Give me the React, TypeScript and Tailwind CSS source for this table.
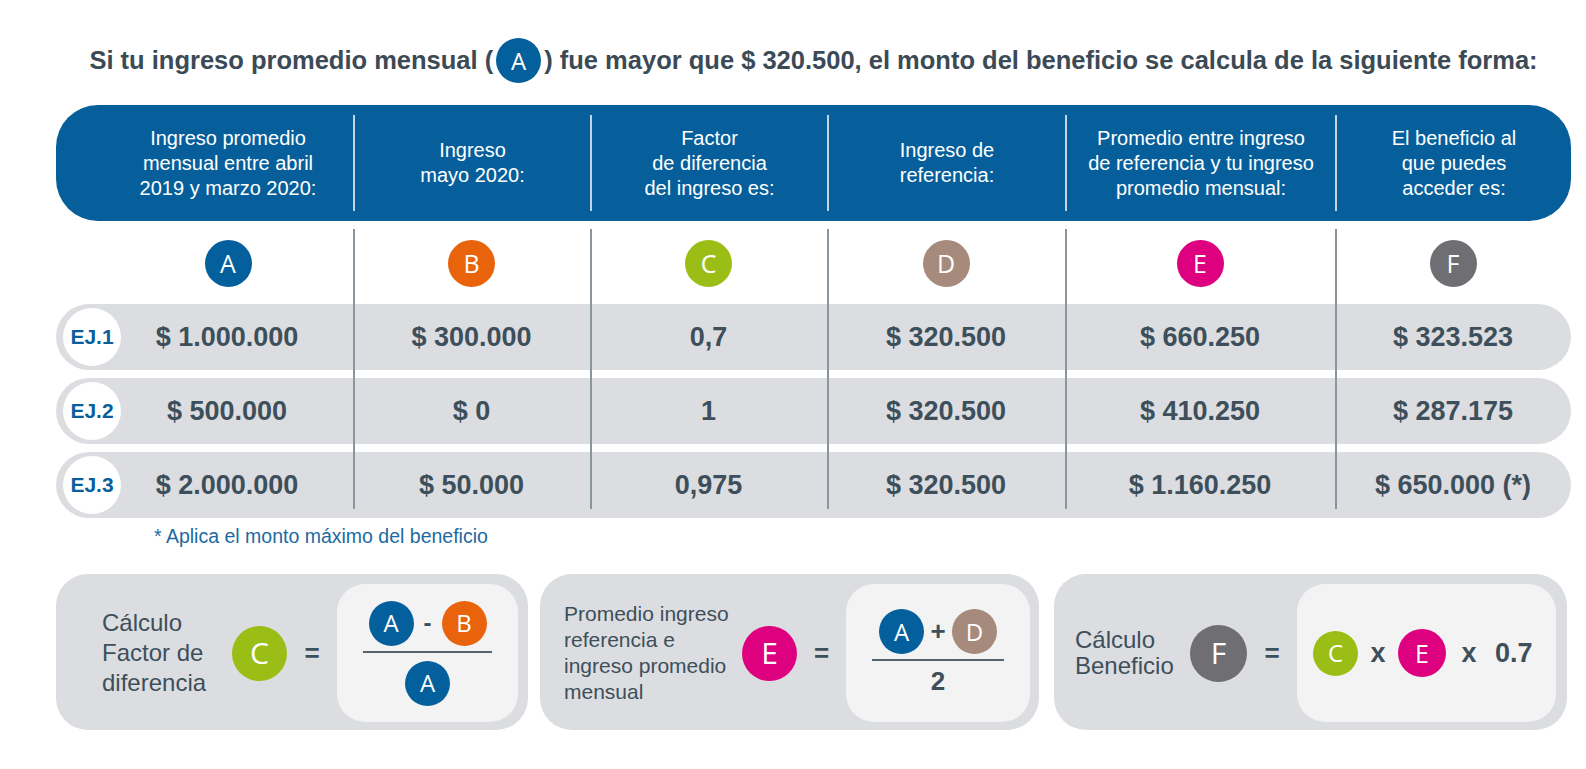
import React from 'react';

const COLS = 'grid grid-cols-[297px_237px_237px_238px_270px_236px]';

const BG: Record<string, string> = {
  A: 'bg-[#03609c]',
  B: 'bg-[#e8630c]',
  C: 'bg-[#9bbe17]',
  D: 'bg-[#a68a7b]',
  E: 'bg-[#dd007f]',
  F: 'bg-[#6e6e73]',
};

const Dot = ({ l, size }: { l: string; size: string }) => (
  <span
    className={`${BG[l]} ${size} inline-flex shrink-0 items-center justify-center rounded-full text-white font-normal font-['Open_Sans',sans-serif] leading-none`}
  >
    {l}
  </span>
);

const headers = [
  ['Ingreso promedio', 'mensual entre abril', '2019 y marzo 2020:'],
  ['Ingreso', 'mayo 2020:'],
  ['Factor', 'de diferencia', 'del ingreso es:'],
  ['Ingreso de', 'referencia:'],
  ['Promedio entre ingreso', 'de referencia y tu ingreso', 'promedio mensual:'],
  ['El beneficio al', 'que puedes', 'acceder es:'],
];

const rows = [
  ['EJ.1', '$ 1.000.000', '$ 300.000', '0,7', '$ 320.500', '$ 660.250', '$ 323.523'],
  ['EJ.2', '$ 500.000', '$ 0', '1', '$ 320.500', '$ 410.250', '$ 287.175'],
  ['EJ.3', '$ 2.000.000', '$ 50.000', '0,975', '$ 320.500', '$ 1.160.250', '$ 650.000 (*)'],
];

const letters = ['A', 'B', 'C', 'D', 'E', 'F'];

export default function App() {
  return (
    <div className="w-[1586px] h-[769px] bg-white font-['Liberation_Sans',Arial,sans-serif] text-[#3d4f5b]">
      <div className="ml-[56px] w-[1515px]">
        {/* title */}
        <div className="pt-[38px] flex items-center justify-center text-[25.5px] font-bold text-[#3b4a55] whitespace-nowrap">
          <span>Si tu ingreso promedio mensual (</span>
          <span className="mx-[3px] flex">
            <Dot l="A" size="w-[45px] h-[45px] text-[24px]" />
          </span>
          <span>) fue mayor que $ 320.500, el monto del beneficio se calcula de la siguiente forma:</span>
        </div>

        {/* header bar */}
        <div className={`${COLS} mt-[22px] h-[116px] rounded-[42px] bg-[#065f9b] text-white text-[20px] leading-[25px]`}>
          {headers.map((lines, i) => (
            <div key={i} className="h-full py-[10px]">
              <div
                className={
                  i === 0
                    ? 'h-full flex flex-col items-center justify-center text-center pl-[67px] pr-[20px]'
                    : 'h-full flex flex-col items-center justify-center text-center border-l-2 border-[#c3d4e3]'
                }
              >
                {lines.map((t) => (
                  <span key={t}>{t}</span>
                ))}
              </div>
            </div>
          ))}
        </div>

        {/* letters and examples */}
        <div className="relative mt-[8px]">
          <div className={`${COLS} pt-[11px]`}>
            {letters.map((l, i) => (
              <div key={l} className={i === 0 ? 'flex justify-center pl-[67px] pr-[20px]' : 'flex justify-center'}>
                <Dot l={l} size="w-[47px] h-[47px] text-[25px]" />
              </div>
            ))}
          </div>

          <div className="mt-[17px] flex flex-col gap-[8px]">
            {rows.map((r) => (
              <div key={r[0]} className={`${COLS} h-[66px] rounded-full bg-[#dcdde0] items-center text-[27px] font-bold`}>
                <div className="flex items-center">
                  <span className="ml-[7px] w-[58px] h-[58px] shrink-0 rounded-full bg-white flex items-center justify-center text-[21px] text-[#0a5f9b]">
                    {r[0]}
                  </span>
                  <span className="flex-1 text-center pr-[20px]">{r[1]}</span>
                </div>
                {r.slice(2).map((v, i) => (
                  <div key={i} className="text-center">
                    {v}
                  </div>
                ))}
              </div>
            ))}
          </div>

          {/* column dividers drawn over the rows */}
          <div className={`${COLS} absolute inset-x-0 top-0 bottom-[9px] pointer-events-none`}>
            {letters.map((l, i) => (
              <div key={l} className={i === 0 ? '' : 'border-l-2 border-[#8b959d]'} />
            ))}
          </div>
        </div>
      </div>

      <p className="mt-[7px] pl-[154px] text-[19.5px] leading-[22px] text-[#1d6aa1]">* Aplica el monto máximo del beneficio</p>

      {/* formulas */}
      <div className="ml-[56px] mt-[27px] flex">
        <div className="w-[472px] h-[156px] rounded-[32px] bg-[#dcdde0] flex items-center pt-[10px] pb-[8px] pr-[10px]">
          <div className="pl-[46px] w-[176px] shrink-0 text-[24px] leading-[30px]">
            Cálculo
            <br />
            Factor de
            <br />
            diferencia
          </div>
          <Dot l="C" size="w-[55px] h-[55px] text-[30px]" />
          <div className="flex-1 text-center text-[26px] font-bold">=</div>
          <div className="w-[181px] h-full rounded-[28px] bg-[#f3f3f3] flex flex-col items-center justify-center">
            <div className="flex items-center">
              <Dot l="A" size="w-[45px] h-[45px] text-[24px]" />
              <span className="w-[28px] text-center text-[24px] font-bold">-</span>
              <Dot l="B" size="w-[45px] h-[45px] text-[24px]" />
            </div>
            <div className="w-[129px] h-[2px] bg-[#56646e] mt-[5px] mb-[8px]" />
            <Dot l="A" size="w-[45px] h-[45px] text-[24px]" />
          </div>
        </div>

        <div className="ml-[12px] w-[499px] h-[156px] rounded-[32px] bg-[#dcdde0] flex items-center pt-[10px] pb-[8px] pr-[9px]">
          <div className="pl-[24px] w-[202px] shrink-0 text-[21px] leading-[26px]">
            Promedio ingreso
            <br />
            referencia e
            <br />
            ingreso promedio
            <br />
            mensual
          </div>
          <Dot l="E" size="w-[55px] h-[55px] text-[30px]" />
          <div className="flex-1 text-center text-[26px] font-bold">=</div>
          <div className="w-[184px] h-full rounded-[28px] bg-[#f3f3f3] flex flex-col items-center justify-center">
            <div className="flex items-center">
              <Dot l="A" size="w-[45px] h-[45px] text-[24px]" />
              <span className="w-[28px] text-center text-[26px] font-bold">+</span>
              <Dot l="D" size="w-[45px] h-[45px] text-[24px]" />
            </div>
            <div className="w-[132px] h-[2px] bg-[#56646e] mt-[5px] mb-[4px]" />
            <span className="text-[26px] font-bold leading-[32px]">2</span>
          </div>
        </div>

        <div className="ml-[15px] w-[513px] h-[156px] rounded-[32px] bg-[#dcdde0] flex items-center pt-[10px] pb-[8px] pr-[11px]">
          <div className="pl-[21px] w-[136px] shrink-0 text-[24px] leading-[26px]">
            Cálculo
            <br />
            Beneficio
          </div>
          <Dot l="F" size="w-[57px] h-[57px] text-[30px]" />
          <div className="flex-1 text-center text-[26px] font-bold">=</div>
          <div className="w-[259px] h-full rounded-[28px] bg-[#f3f3f3] flex items-center pl-[16px] text-[27px] font-bold">
            <Dot l="C" size="w-[45px] h-[45px] text-[24px]" />
            <span className="w-[40px] text-center">x</span>
            <Dot l="E" size="w-[48px] h-[48px] text-[25px]" />
            <span className="w-[46px] text-center">x</span>
            <span className="ml-[3px]">0.7</span>
          </div>
        </div>
      </div>
    </div>
  );
}
